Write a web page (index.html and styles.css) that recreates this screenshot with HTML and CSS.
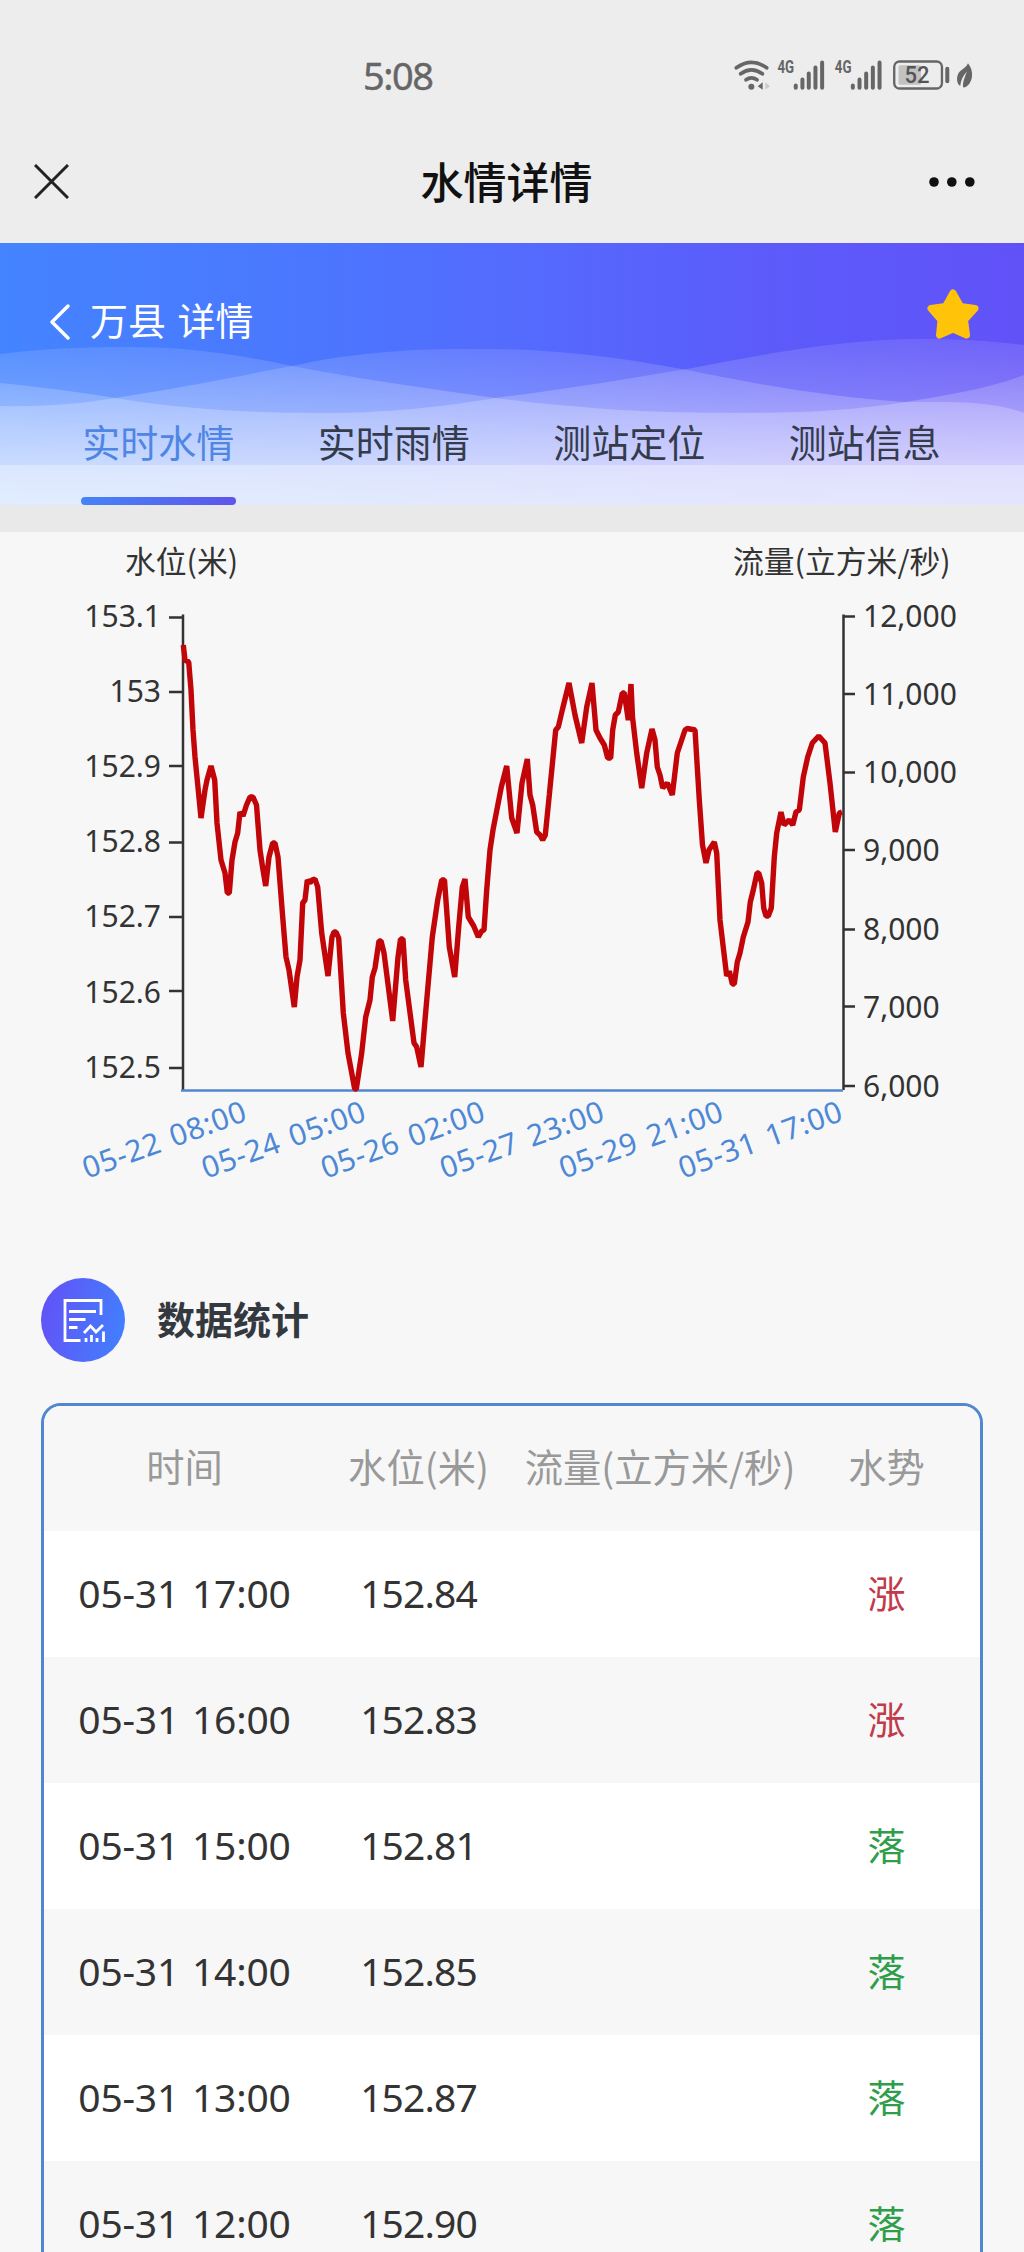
FILE: index.html
```html
<!DOCTYPE html>
<html lang="zh-CN">
<head>
	<meta charset="UTF-8">
	<meta name="viewport" content="width=device-width, initial-scale=1.0">
	<title>水情详情</title>
	<link rel="stylesheet" href="styles.css">
</head>
<body>
<div class="page">
	<div class="status-bar">
		<span class="clock">5:08</span>
		<svg class="status-icons" viewBox="90 50 740 110">
			<!-- wifi -->
			<g fill="none" stroke="#666" stroke-width="11" stroke-linecap="round">
				<path d="M109 85Q154 52 200 85"/>
				<path d="M122 103Q154 79 187 103"/>
				<path d="M138 121Q154 109 171 121"/>
			</g>
			<circle cx="154" cy="142" r="9" fill="#666"/>
			<path d="M188 128V151L173 140Z" fill="#666"/>
			<path d="M196 128V151L210 140Z" fill="#ccc"/>
			<!-- signal 1 -->
			<text class="net" x="232" y="101" textLength="50" lengthAdjust="spacingAndGlyphs">4G</text>
			<g stroke="#666" stroke-width="12" stroke-linecap="round">
				<path d="M287 138V145M307 120V145M326 102V145M346 84V145M366 69V145"/>
			</g>
			<!-- signal 2 -->
			<text class="net" x="404" y="101" textLength="50" lengthAdjust="spacingAndGlyphs">4G</text>
			<g stroke="#666" stroke-width="12" stroke-linecap="round">
				<path d="M458 138V145M478 120V145M498 102V145M518 84V145M538 69V145"/>
			</g>
			<!-- battery -->
			<rect x="582" y="66" width="143" height="81" rx="16" fill="none" stroke="#666" stroke-width="7"/>
			<rect x="595" y="77" width="67" height="59" rx="5" fill="#c2c2c2"/>
			<text class="level" x="613" y="131" textLength="75" lengthAdjust="spacingAndGlyphs">52</text>
			<path d="M741 88V125" stroke="#666" stroke-width="12" stroke-linecap="round"/>
			<path d="M803 71C812 82 817 97 815 110C813 128 803 142 789 144C786 134 790 120 800 96C788 108 781 124 780 139C771 134 768 120 772 107C777 90 796 88 803 71Z" fill="#666"/>
		</svg>
	</div>

	<div class="nav-bar">
		<svg class="close" viewBox="0 0 35 35"><path d="M1 1L34 34M34 1L1 34" stroke="#222" stroke-width="3"/></svg>
		<h1>水情详情</h1>
		<svg class="more" viewBox="0 0 46 10">
			<circle cx="5" cy="5" r="4.8"/><circle cx="22.8" cy="5" r="4.8"/><circle cx="40.8" cy="5" r="4.8"/>
		</svg>
	</div>

	<div class="hero">
		<svg class="waves" viewBox="0 243 1024 262" preserveAspectRatio="none">
			<defs>
				<linearGradient id="wave" gradientUnits="userSpaceOnUse" x1="0" y1="340" x2="0" y2="465">
					<stop offset="0" stop-color="#fff" stop-opacity=".1"/>
					<stop offset="1" stop-color="#fff" stop-opacity=".34"/>
				</linearGradient>
				<linearGradient id="fade" x1="0" y1="0" x2="0" y2="1">
					<stop offset="0" stop-color="#fff" stop-opacity=".32"/>
					<stop offset="1" stop-color="#f4faff" stop-opacity=".55"/>
				</linearGradient>
			</defs>
			<g fill="url(#wave)">
				<path d="M0 354C45 348 90 347 130 347C190 347 240 355 292 366C360 379 430 389 495 398C590 410 660 413 735 413C800 413 850 411 905 402C950 395 990 388 1024 375V505H0Z"/>
				<path d="M0 406C40 407 80 404 115 398C180 388 240 376 292 366C350 353 410 349 460 349C540 348 600 354 687 370C770 387 840 398 905 402C950 402 990 400 1024 413V505H0Z"/>
				<path d="M0 383C40 387 80 392 115 398C180 409 250 413 320 413C390 413 440 407 495 398C560 390 620 380 687 369C760 355 840 339 920 339C960 339 990 341 1024 345V505H0Z"/>
			</g>
			<rect x="0" y="465" width="1024" height="40" fill="url(#fade)"/>
		</svg>
		<div class="hero-head">
			<svg class="back" viewBox="0 0 20 36"><path d="M18 2L2 18L18 34" fill="none" stroke="#fff" stroke-width="3.4" stroke-linecap="round" stroke-linejoin="round"/></svg>
			<span class="station">万县 详情</span>
			<svg class="star" viewBox="0 0 54 52"><path d="M27 5L34.5 18.5L49 20.5L38.5 32L40.5 47L27 41L13.5 47L15 32L5 20.5L19.500 18.500Z" fill="#ffc40a" stroke="#ffc40a" stroke-width="7" stroke-linejoin="round"/></svg>
		</div>
		<div class="tabs">
			<div class="tab active">实时水情</div>
			<div class="tab">实时雨情</div>
			<div class="tab">测站定位</div>
			<div class="tab">测站信息</div>
		</div>
	</div>

	<svg class="chart" viewBox="0 532 1024 698">
		<g class="legend">
			<text x="125" y="572.500">水位(米)</text>
			<text x="733" y="572.500">流量(立方米/秒)</text>
		</g>
		<!-- left axis -->
		<path class="axis" d="M183 614.500V1090M169 617.500H183M169 692H183M169 766H183M169 842.500H183M169 917H183M169 991H183M169 1068H183"/>
		<g class="labels" text-anchor="end">
			<text x="161" y="626.500">153.1</text>
			<text x="161" y="701.500">153</text>
			<text x="161" y="777">152.9</text>
			<text x="161" y="852">152.8</text>
			<text x="161" y="927">152.7</text>
			<text x="161" y="1002.500">152.6</text>
			<text x="161" y="1078">152.5</text>
		</g>
		<!-- right axis -->
		<path class="axis" d="M843.500 614.500V1090M843 616.500H855M843 694H855M843 772.500H855M843 850H855M843 929.500H855M843 1006.500H855M843 1086H855"/>
		<g class="labels">
			<text x="863" y="626.500">12,000</text>
			<text x="863" y="704.500">11,000</text>
			<text x="863" y="782.500">10,000</text>
			<text x="863" y="861">9,000</text>
			<text x="863" y="939.500">8,000</text>
			<text x="863" y="1018">7,000</text>
			<text x="863" y="1096.500">6,000</text>
		</g>
		<!-- time axis -->
		<path class="time-axis" d="M181 1090.500H843"/>
		<g class="times" text-anchor="end">
			<text transform="translate(249 1120) rotate(-20)">05-22 08:00</text>
			<text transform="translate(368.200 1120) rotate(-20)">05-24 05:00</text>
			<text transform="translate(487.400 1120) rotate(-20)">05-26 02:00</text>
			<text transform="translate(606.600 1120) rotate(-20)">05-27 23:00</text>
			<text transform="translate(725.800 1120) rotate(-20)">05-29 21:00</text>
			<text transform="translate(845 1120) rotate(-20)">05-31 17:00</text>
		</g>
		<polyline class="level-line" points="183.300,645 185,660 188.700,662 191,690 193,730 195,757 201,818 205,790 207,780 211,766 214.700,780 217,823 221,860 225,873 227.300,893 229.300,893 232,860 235,842 237.700,833 240,812 243,816 246.500,805 250,797 253,797 256.500,805 260,850 262.700,868 265.700,886 269,857 272.700,843 275,843 278,857 282.700,917 286,957 289,970 294.300,1007 297,977 300,960 302.700,903 305,900 307.300,880 310,883 312,880 315,879 317.700,887 321.700,933 328,976 332,937 334,932 336,932 338.700,938 343.300,1013 348,1053 354.700,1089 356.300,1089 361.700,1053 365.700,1017 370,1000 372.300,977 375,968 379,941 381,941 384,953 392.700,1021 398,957 400.500,939 403,939 405.700,980 414,1043 416.700,1047 421,1067 425,1020 432.300,937 437.700,900 441.700,880 444.500,880 449.300,947 454.700,977 458.700,927 462.300,887 465,879 468.300,917 473.700,926 478.300,937 481.700,931 484,930 486.700,890 490,850 493,830 501.300,787 506.700,766 511.700,818 517,833 522,783 527.300,759 530,795 532.700,805 536.700,832 540,835 542.700,840 545.300,835 549.300,795 555.700,730 558.300,727 562.300,710 569,683 575,715 581.700,743 586.700,707 592,683 596,730 600,738 604.300,745 607.700,758 610.700,758 612.700,730 615.300,715 618.300,712 622.300,693 624.300,693 628.300,720 631,684 632.500,717 636.700,753 641.700,788 646.700,753 652,729 655,740 657.300,767 660,775 662.700,788 667.300,783 672.300,795 677.300,753 685,730 687.300,728.500 695,730 699.300,800 702.500,845 706,863 709,850 714.300,842 716.700,853 720,920 726.700,976 729.300,971 732.300,984 734.300,984 737.300,962 740,953 743.300,937 748,922 750.300,902 753.300,890 757,873 758.700,873 761.700,883 763.700,908 766,916 768.300,916 771.300,908 774.300,857 776.700,833 781,812 784,825 789.300,820 792.700,825 796,812 799.300,810 803.300,777 807.700,757 812.300,743 818.700,736 825,743 830,783 835.300,832 839.300,813 842,812"/>
	</svg>

	<div class="section-title">
		<svg class="section-icon" viewBox="0 0 84 84">
			<defs>
				<linearGradient id="disc" x1="0" y1=".4" x2="1" y2=".6">
					<stop offset="0" stop-color="#6253f7"/>
					<stop offset="1" stop-color="#427ffd"/>
				</linearGradient>
			</defs>
			<circle cx="42" cy="42" r="42" fill="url(#disc)"/>
			<g fill="none" stroke="#fff" stroke-width="2.800">
				<path d="M60 37V22.500H24V62.500H39.500"/>
				<path d="M28 33.500H55M28 41.500H44.500M28 49.500H36.500"/>
				<path d="M43 55L49.500 48L55 54L62 47"/>
				<path d="M45 64V60M50.500 64V57M56 64V60M62.500 64V53.500"/>
			</g>
		</svg>
		<h2>数据统计</h2>
	</div>

	<div class="table">
		<div class="row head">
			<span>时间</span><span>水位(米)</span><span>流量(立方米/秒)</span><span>水势</span>
		</div>
		<div class="row">
			<span class="time">05-31 17:00</span><span class="value">152.84</span><span></span><span class="rise">涨</span>
		</div>
		<div class="row">
			<span class="time">05-31 16:00</span><span class="value">152.83</span><span></span><span class="rise">涨</span>
		</div>
		<div class="row">
			<span class="time">05-31 15:00</span><span class="value">152.81</span><span></span><span class="fall">落</span>
		</div>
		<div class="row">
			<span class="time">05-31 14:00</span><span class="value">152.85</span><span></span><span class="fall">落</span>
		</div>
		<div class="row">
			<span class="time">05-31 13:00</span><span class="value">152.87</span><span></span><span class="fall">落</span>
		</div>
		<div class="row">
			<span class="time">05-31 12:00</span><span class="value">152.90</span><span></span><span class="fall">落</span>
		</div>
	</div>
</div>
</body>
</html>
```
FILE: styles.css
```css
* {
	box-sizing: border-box;
}

body {
	margin: 0;
	background-color: #f7f7f7;
	font-family: "Noto Sans", "Noto Sans CJK SC", sans-serif;
	color: #333;
}

svg {
	display: block;
}

h1, h2 {
	margin: 0;
}

.page {
	width: 1024px;
	height: 2252px;
	overflow: hidden;
}

/* 状态栏 */
.status-bar {
	display: flex;
	justify-content: space-between;
	height: 122px;
	padding: 56px 47px 0 363px;
	background-color: #ededed;
}

.clock {
	margin-top: -2px;
	font-size: 38px;
	line-height: 42px;
	letter-spacing: -1.500px;
	color: #666;
	-webkit-text-stroke: 0.4px #666;
}

.status-icons {
	width: 247px;
	height: 37px;
}

.net {
	font-family: Roboto, sans-serif;
	font-size: 54px;
	font-weight: bold;
	fill: #666;
}

.level {
	font-family: Roboto, sans-serif;
	font-size: 70px;
	font-weight: 500;
	fill: #555;
}

/* 导航栏 */
.nav-bar {
	display: grid;
	grid-template-columns: 1fr auto 1fr;
	align-items: center;
	height: 121px;
	padding: 0 45px 2px 34px;
	background-color: #ededed;
}

.nav-bar h1 {
	margin-top: -4px;
	font-family: "Noto Sans CJK SC", sans-serif;
	font-size: 43px;
	font-weight: 500;
	line-height: 60px;
	color: #111;
}

.close {
	width: 35px;
	height: 35px;
}

.more {
	width: 46px;
	height: 10px;
	margin-right: 4px;
	justify-self: end;
	fill: #111;
}

.hero {
	position: relative;
	height: 289px;
	border-bottom: 27px solid #e9e9e9;
	background: linear-gradient(90deg, #4484ff 0%, #4b77fe 30%, #546bfe 50%, #5c5bfa 75%, #6152f8 100%);
	font-family: "Noto Sans CJK SC", sans-serif;
	font-size: 38px;
}

.waves {
	position: absolute;
	top: 0;
	left: 0;
	width: 100%;
	height: 262px;
}

.hero-head {
	position: relative;
	display: flex;
	align-items: center;
	height: 156px;
	padding: 0 44px 0 50px;
	color: #fff;
}

.back {
	width: 20px;
	height: 36px;
	margin: 1px 20px 0 0;
}

.station {
	margin-top: -5px;
	word-spacing: 3px;
}

.star {
	width: 54px;
	height: 52px;
	margin: -14px 0 0 auto;
}

.tabs {
	position: relative;
	display: flex;
	gap: 81px;
	height: 106px;
	padding-left: 81px;
}

.tab {
	width: 154.500px;
	padding-top: 14px;
	line-height: 56px;
	text-align: center;
	color: #343c4c;
}

.tab.active {
	color: #4f86e4;
}

.tab.active::after {
	content: "";
	display: block;
	height: 8px;
	margin-top: 28px;
	border-radius: 4px;
	background: linear-gradient(90deg, #4484f7, #5f55ea);
}

/* 水位流量曲线 */
.chart {
	width: 1024px;
	height: 698px;
	font-size: 30px;
}

.legend {
	font-family: "Noto Sans CJK SC", sans-serif;
	font-size: 30.800px;
	fill: #333;
}

.labels {
	fill: #333;
}

.axis {
	fill: none;
	stroke: #333;
	stroke-width: 2.500;
}

.time-axis {
	stroke: #5087cf;
	stroke-width: 2.500;
}

.times {
	letter-spacing: 0.6px;
	word-spacing: 3px;
	fill: #4d88d6;
}

.level-line {
	fill: none;
	stroke: #c20508;
	stroke-width: 5.400;
	stroke-linejoin: bevel;
}

.section-title {
	display: flex;
	align-items: center;
	height: 84px;
	margin: 48px 0 41px 41px;
}

.section-icon {
	width: 84px;
	height: 84px;
	margin-right: 32px;
}

.section-title h2 {
	margin-top: -5px;
	font-family: "Noto Sans CJK SC", sans-serif;
	font-size: 38px;
	line-height: 50px;
	color: #34393f;
}

/* 数据表格 */
.table {
	width: 942px;
	height: 900px;
	margin-left: 41px;
	border: 3px solid #5087cf;
	border-radius: 20px;
	overflow: hidden;
}

.row {
	display: grid;
	grid-template-columns: 281px 187px 296px 157px;
	align-items: center;
	height: 126px;
	padding-bottom: 3px;
	background-color: #f7f7f7;
	font-size: 39px;
	line-height: 56px;
	text-align: center;
}

.row:nth-child(even) {
	background-color: #fff;
}

.row.head {
	height: 125px;
	padding-bottom: 5px;
	font-family: "Noto Sans CJK SC", sans-serif;
	font-size: 38.300px;
	color: #999;
}

.time {
	letter-spacing: -0.2px;
	word-spacing: 3px;
}

.value {
	letter-spacing: -0.9px;
}

.rise, .fall {
	margin-top: -2px;
	font-family: "Noto Sans CJK SC", sans-serif;
	font-size: 38px;
}

.rise {
	color: #c23a4b;
}

.fall {
	color: #2f9e4b;
}
```
